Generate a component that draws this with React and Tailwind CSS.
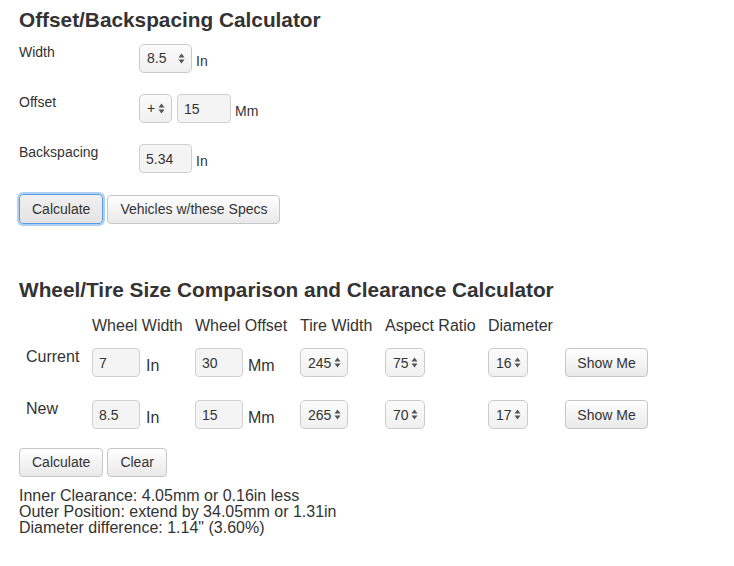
import React from "react";

function Arrows() {
  return (
    <svg width="7" height="11" viewBox="0 0 7 11" className="shrink-0">
      <path d="M3.5 0.5 L6.5 4.5 L0.5 4.5 Z" fill="#555" />
      <path d="M3.5 10.5 L6.5 6.5 L0.5 6.5 Z" fill="#555" />
    </svg>
  );
}

function Select({ value, w }) {
  return (
    <div
      className={`flex h-[29px] items-center justify-between rounded-[5px] border border-[#cbcbcb] bg-gradient-to-b from-[#fbfbfb] to-[#f0f0f0] pl-[7px] pr-[6px] text-[14px] text-[#333] ${w}`}
    >
      <span>{value}</span>
      <Arrows />
    </div>
  );
}

function Box({ value, w }) {
  return (
    <input
      readOnly
      defaultValue={value}
      className={`h-[29px] rounded-[4px] border border-[#d0d0d0] bg-[#f4f4f4] px-[6px] text-[14px] text-[#333] outline-none ${w}`}
    />
  );
}

function Btn({ children, focus }) {
  return (
    <button
      className={
        focus
          ? "h-[30px] rounded-[4px] border border-[#5b9be0] bg-gradient-to-b from-[#f0f0f0] to-[#e4e4e4] px-[12px] text-[14px] text-[#333] shadow-[0_0_0_2px_rgba(110,170,235,0.55)]"
          : "h-[29px] rounded-[4px] border border-[#c6c6c6] bg-gradient-to-b from-[#ffffff] to-[#e9e9e9] px-[12px] text-[14px] text-[#333]"
      }
    >
      {children}
    </button>
  );
}

const rows = [
  { label: "Current", ww: "7", wo: "30", tw: "245", ar: "75", d: "16" },
  { label: "New", ww: "8.5", wo: "15", tw: "265", ar: "70", d: "17" },
];

export default function App() {
  return (
    <div className="min-h-screen bg-white px-[19px] pt-[8px] font-['Liberation_Sans',Arial,sans-serif] text-[#333]">
      {/* offset / backspacing */}
      <h2 className="text-[20.8px] font-bold leading-[23px]">Offset/Backspacing Calculator</h2>

      <div className="mt-[13px] flex flex-col gap-[21px]">
        <div className="flex items-start">
          <div className="w-[120px] text-[14px] leading-[17px]">Width</div>
          <Select value="8.5" w="w-[53px]" />
          <span className="ml-[4px] pt-[9px] text-[14px] leading-[16px]">In</span>
        </div>
        <div className="flex items-start">
          <div className="w-[120px] text-[14px] leading-[17px]">Offset</div>
          <Select value="+" w="w-[33px]" />
          <Box value="15" w="ml-[5px] w-[54px]" />
          <span className="ml-[4px] pt-[9px] text-[14px] leading-[16px]">Mm</span>
        </div>
        <div className="flex items-start">
          <div className="w-[120px] text-[14px] leading-[17px]">Backspacing</div>
          <Box value="5.34" w="w-[53px]" />
          <span className="ml-[4px] pt-[9px] text-[14px] leading-[16px]">In</span>
        </div>
      </div>

      <div className="mt-[21px] flex items-center gap-[4px]">
        <Btn focus>Calculate</Btn>
        <Btn>Vehicles w/these Specs</Btn>
      </div>

      {/* wheel / tire comparison */}
      <h2 className="mt-[54px] text-[20.8px] font-bold leading-[23px]">
        Wheel/Tire Size Comparison and Clearance Calculator
      </h2>

      <div className="mt-[16px] grid grid-cols-[73px_103px_105px_85px_103px_77px_auto] text-[16px] leading-[18px]">
        <div />
        <div>Wheel Width</div>
        <div>Wheel Offset</div>
        <div>Tire Width</div>
        <div>Aspect Ratio</div>
        <div>Diameter</div>
        <div />
      </div>

      <div className="mt-[13px] flex flex-col gap-[23px]">
        {rows.map((r) => (
          <div
            key={r.label}
            className="grid grid-cols-[73px_103px_105px_85px_103px_77px_auto] items-start text-[16px] leading-[18px]"
          >
            <div className="pl-[7px]">{r.label}</div>
            <div className="flex items-start">
              <Box value={r.ww} w="w-[48px]" />
              <span className="ml-[6px] pt-[9px]">In</span>
            </div>
            <div className="flex items-start">
              <Box value={r.wo} w="w-[48px]" />
              <span className="ml-[5px] pt-[9px]">Mm</span>
            </div>
            <div>
              <Select value={r.tw} w="w-[48px]" />
            </div>
            <div>
              <Select value={r.ar} w="w-[40px]" />
            </div>
            <div>
              <Select value={r.d} w="w-[40px]" />
            </div>
            <div>
              <button className="h-[29px] w-[83px] rounded-[4px] border border-[#c6c6c6] bg-gradient-to-b from-[#ffffff] to-[#e9e9e9] text-[14px] text-[#333]">
                Show Me
              </button>
            </div>
          </div>
        ))}
      </div>

      <div className="mt-[19px] flex items-center gap-[4px]">
        <Btn>Calculate</Btn>
        <Btn>Clear</Btn>
      </div>

      <div className="mt-[11px] text-[16px] leading-[16px]">
        <div>Inner Clearance: 4.05mm or 0.16in less</div>
        <div>Outer Position: extend by 34.05mm or 1.31in</div>
        <div>Diameter difference: 1.14" (3.60%)</div>
      </div>
    </div>
  );
}
